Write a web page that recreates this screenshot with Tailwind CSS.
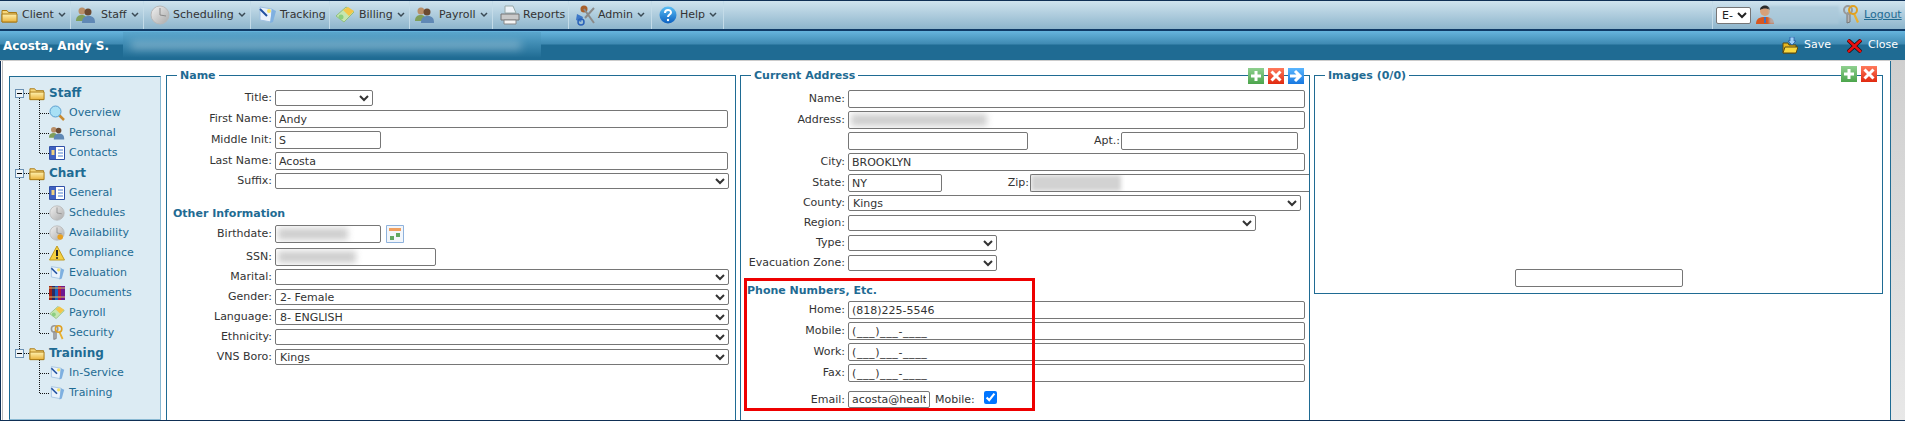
<!DOCTYPE html>
<html><head><meta charset="utf-8"><title>Staff</title>
<script src="https://cdn.jsdelivr.net/npm/@tailwindcss/browser@4"></script>
</head>
<body class="bg-white">
<svg class="absolute w-0 h-0" aria-hidden="true"><defs>
<linearGradient id="gf" x1="0" y1="0" x2="0" y2="1"><stop offset="0" stop-color="#fff2b0"/><stop offset="1" stop-color="#e9b23c"/></linearGradient>
<linearGradient id="gc" x1="0" y1="0" x2="1" y2="1"><stop offset="0" stop-color="#f2f2f2"/><stop offset="1" stop-color="#a9a9a9"/></linearGradient>
<linearGradient id="gh" x1="0" y1="0" x2="0" y2="1"><stop offset="0" stop-color="#5cc0f5"/><stop offset="1" stop-color="#0a5fc0"/></linearGradient>
<linearGradient id="gg" x1="0" y1="0" x2="0" y2="1"><stop offset="0" stop-color="#8fd08f"/><stop offset="1" stop-color="#4ca54c"/></linearGradient>
<linearGradient id="gr" x1="0" y1="0" x2="0" y2="1"><stop offset="0" stop-color="#ff7a5c"/><stop offset="1" stop-color="#e02a10"/></linearGradient>
<linearGradient id="gb" x1="0" y1="0" x2="0" y2="1"><stop offset="0" stop-color="#5ab6ff"/><stop offset="1" stop-color="#1878e0"/></linearGradient>
<symbol id="folder" viewBox="0 0 17 16"><path d="M1 3.500h5l1.500 2h8v9.500h-14.500z" fill="#f6d67a" stroke="#a97a16"/><path d="M1 7h15v8h-15z" fill="url(#gf)" stroke="#a97a16"/></symbol>
<symbol id="people" viewBox="0 0 20 18"><circle cx="6" cy="5" r="3.500" fill="#b98f68"/><path d="M0 15c0-5 3-6 6-6s5 2 5 6z" fill="#7f9f5a"/><circle cx="12" cy="6" r="3.500" fill="#6b4a32"/><path d="M6 17c0-6 3-7 7-7s6 2 6 7z" fill="#5f88b5"/></symbol>
<symbol id="clock" viewBox="0 0 20 20"><circle cx="10" cy="10" r="9" fill="url(#gc)" stroke="#b8b8b8"/><path d="M10 3v7l6 1" fill="none" stroke="#8a8a8a"/></symbol>
<symbol id="clockb" viewBox="0 0 20 20"><circle cx="10" cy="10" r="9" fill="url(#gc)" stroke="#b8b8b8"/><path d="M10 3v7l6 1" fill="none" stroke="#8a8a8a"/><circle cx="14" cy="15" r="3.500" fill="#e8a020"/></symbol>
<symbol id="track" viewBox="0 0 20 18"><path d="M3 1l12 2-1 13-11-2z" fill="#e9f2fb" stroke="#9fc0e0"/><path d="M15 3l4 2-3 11-3 1z" fill="#7fb0e0"/><path d="M3 3l7 7" stroke="#2050a0" stroke-width="2"/><circle cx="12" cy="5" r="2" fill="#f5e26a"/></symbol>
<symbol id="money" viewBox="0 0 20 20"><path d="M1 11l10-9 8 5-10 10z" fill="#c6e6b0" stroke="#8fbf80"/><path d="M8 5l5-3 6 4-5 5z" fill="#f3c64a"/><circle cx="6" cy="12" r="2.500" fill="#8ccf80"/></symbol>
<symbol id="printer" viewBox="0 0 20 20"><path d="M5 1h8l3 7h-11z" fill="#eef3f8" stroke="#9aa"/><path d="M1 9h18v6h-18z" fill="#c9c9c9" stroke="#777"/><path d="M4 15h12v4h-12z" fill="#f5f5f5" stroke="#888"/></symbol>
<symbol id="admin" viewBox="0 0 21 21"><circle cx="9" cy="4" r="3.500" fill="#a8602c"/><path d="M2 9l6 3-2 5-5-2z" fill="#3d78c8"/><path d="M10 13l9-10M9 4l10 14" stroke="#8a8a8a" stroke-width="2"/><circle cx="6" cy="17" r="3" fill="none" stroke="#2a62b8" stroke-width="1.500"/></symbol>
<symbol id="help" viewBox="0 0 18 18"><circle cx="9" cy="9" r="8.500" fill="url(#gh)"/><path d="M6 7c0-4 6-4 6-.500 0 2-3 2-3 4.500" fill="none" stroke="#fff" stroke-width="2"/><circle cx="9" cy="14" r="1.200" fill="#fff"/></symbol>
<symbol id="glass" viewBox="0 0 16 16"><path d="M10 10l5 5" stroke="#c98a30" stroke-width="2.500"/><circle cx="6.500" cy="6.500" r="5.500" fill="#a8e0f5" stroke="#5a9fd0"/></symbol>
<symbol id="card" viewBox="0 0 16 16"><path d="M.5 1.500h15v13h-15z" fill="#fff" stroke="#3050a8"/><path d="M1 2h6v12h-6z" fill="#3f60c0"/><path d="M2.500 5h3v5h-3z" fill="#f0d080"/><path d="M9 5h5M9 8h5M9 11h5" stroke="#4f80d0"/></symbol>
<symbol id="warn" viewBox="0 0 16 16"><path d="M8 1l7.500 14h-15z" fill="#f5d040" stroke="#c09a20"/><path d="M8 5v6" stroke="#222" stroke-width="2"/><circle cx="8" cy="13" r="1" fill="#222"/></symbol>
<symbol id="books" viewBox="0 0 16 16"><path d="M0 1h3v14h-3z" fill="#a02018"/><path d="M3 1h3v14h-3z" fill="#2a2a60"/><path d="M6 1h3v14h-3z" fill="#1860c0"/><path d="M9 1h3v14h-3z" fill="#b01840"/><path d="M12 1h4v14h-4z" fill="#701890"/><path d="M0 3h16M0 12h16" stroke="#e8c060"/></symbol>
<symbol id="keys" viewBox="0 0 20 20"><path d="M6 8v10l3-1v-9z" fill="#b5b5b5" stroke="#777"/><circle cx="7" cy="5" r="4" fill="none" stroke="#999" stroke-width="2"/><path d="M12 9l4 9 2-1-4-9z" fill="#e8b030"/><circle cx="12" cy="5" r="4" fill="none" stroke="#e0a020" stroke-width="2"/></symbol>
<symbol id="user" viewBox="0 0 18 20"><circle cx="9" cy="6" r="5" fill="#d8a078"/><path d="M4 5c0-6 10-6 10 0-3-2-7-2-10 0z" fill="#2a2a2a"/><path d="M0 19c0-6 4-7 9-7s9 1 9 7z" fill="#d85820"/><path d="M8 12h2v6h-2z" fill="#4070c0"/></symbol>
<symbol id="save" viewBox="0 0 16 17"><path d="M1 6h5l1 2h7v8h-13z" fill="#e8b820" stroke="#5a4a10"/><path d="M3 10h13l-2 6h-13z" fill="#f8d840" stroke="#5a4a10"/><path d="M8 0h4v4h2l-4 4-4-4h2z" fill="#9fd0f8" stroke="#2050a0" stroke-width=".7"/></symbol>
<symbol id="bigx" viewBox="0 0 15 14"><path d="M1 1l13 12M14 1l-13 12" stroke="#101010" stroke-width="4"/><path d="M1 1l13 12M14 1l-13 12" stroke="#e81010" stroke-width="2.500"/></symbol>
<symbol id="plus" viewBox="0 0 16 16"><path d="M0 0h16v16h-16z" fill="url(#gg)"/><path d="M8 3v10M3 8h10" stroke="#fff" stroke-width="3"/></symbol>
<symbol id="del" viewBox="0 0 16 16"><path d="M0 0h16v16h-16z" fill="url(#gr)"/><path d="M3.500 3.500l9 9M12.500 3.500l-9 9" stroke="#fff" stroke-width="3"/></symbol>
<symbol id="arrow" viewBox="0 0 16 16"><path d="M0 0h16v16h-16z" fill="url(#gb)"/><path d="M7 3l5 5-5 5M2 8h9" fill="none" stroke="#fff" stroke-width="3"/></symbol>
<symbol id="cal" viewBox="0 0 18 18"><path d="M.5.500h17v17h-17z" fill="#f2f6fb" stroke="#8fb2dc"/><path d="M3 3h12v3h-12z" fill="#f0a060"/><path d="M4 11h4v4h-4z" fill="#60a860"/><path d="M10 8h4v4h-4z" fill="#60a860"/></symbol>
<symbol id="chev" viewBox="0 0 8 6"><path d="M1 1l3 3 3-3" fill="none" stroke="#3a4a55" stroke-width="1.500"/></symbol>
</defs></svg>

<div class="w-[1905px] h-[421px] overflow-hidden flex flex-col font-['DejaVu_Sans',sans-serif] text-[11px] text-[#333] border-t border-b border-[#0f2f55]">

  <!-- toolbar -->
  <div class="h-[30px] shrink-0 flex bg-gradient-to-b from-[#cfe3ee] to-[#8db5cc] border-b-2 border-[#0f3a66]">
    <div class="w-[71px] border-r border-[#c3dbe8] flex items-center overflow-hidden"><svg class="w-[17px] h-[16px] ml-[1px] mr-[4px] shrink-0"><use href="#folder"/></svg>Client<svg class="w-[8px] h-[6px] ml-[4px]"><use href="#chev"/></svg></div>
    <div class="w-[73px] border-r border-[#c3dbe8] flex items-center pl-[5px]"><svg class="w-[20px] h-[18px] mr-[5px]"><use href="#people"/></svg>Staff<svg class="w-[8px] h-[6px] ml-[4px]"><use href="#chev"/></svg></div>
    <div class="w-[107px] border-r border-[#c3dbe8] flex items-center pl-[6px]"><svg class="w-[20px] h-[20px] mr-[3px]"><use href="#clock"/></svg>Scheduling<svg class="w-[8px] h-[6px] ml-[4px]"><use href="#chev"/></svg></div>
    <div class="w-[79px] border-r border-[#c3dbe8] flex items-center pl-[6px]"><svg class="w-[20px] h-[18px] mr-[3px]"><use href="#track"/></svg>Tracking</div>
    <div class="w-[80px] border-r border-[#c3dbe8] flex items-center pl-[5px]"><svg class="w-[20px] h-[20px] mr-[4px]"><use href="#money"/></svg>Billing<svg class="w-[8px] h-[6px] ml-[4px]"><use href="#chev"/></svg></div>
    <div class="w-[83px] border-r border-[#c3dbe8] flex items-center pl-[5px]"><svg class="w-[20px] h-[18px] mr-[4px]"><use href="#people"/></svg>Payroll<svg class="w-[8px] h-[6px] ml-[4px]"><use href="#chev"/></svg></div>
    <div class="w-[76px] border-r border-[#c3dbe8] flex items-center pl-[7px]"><svg class="w-[20px] h-[20px] mr-[3px]"><use href="#printer"/></svg>Reports</div>
    <div class="w-[83px] border-r border-[#c3dbe8] flex items-center pl-[6px]"><svg class="w-[21px] h-[21px] mr-[2px]"><use href="#admin"/></svg>Admin<svg class="w-[8px] h-[6px] ml-[4px]"><use href="#chev"/></svg></div>
    <div class="w-[72px] border-r border-[#c3dbe8] flex items-center pl-[7px]"><svg class="w-[18px] h-[18px] mr-[3px]"><use href="#help"/></svg>Help<svg class="w-[8px] h-[6px] ml-[4px]"><use href="#chev"/></svg></div>
    <div class="w-[989px] border-r border-[#c3dbe8]"></div>
    <div class="flex-1 flex items-center pl-[3px]">
      <select class="w-[35px] h-[17px] bg-white border border-[#767676] rounded-[2px] text-[11px] text-[#222] pl-[1px]"><option>E-</option></select>
      <svg class="w-[18px] h-[20px] ml-[5px] shrink-0"><use href="#user"/></svg>
      <div class="w-[70px] h-[18px] -ml-[5px] bg-[#a9c7d8]/70 blur-[1px]"></div>
      <svg class="w-[20px] h-[20px] ml-[2px] shrink-0"><use href="#keys"/></svg>
      <a class="ml-[3px] underline text-[#1f6b93]">Logout</a>
    </div>
  </div>

  <!-- title bar -->
  <div class="h-[29px] shrink-0 flex items-center text-white bg-[linear-gradient(#66b4dd_0,#3f8ab2_13px,#1f6b93_14px,#1f6b93_100%)]">
    <b class="ml-[3px] w-[120px] text-[12px] font-bold">Acosta, Andy S.</b>
    <div class="w-[418px] h-[26px] -mt-[2px] overflow-hidden bg-[linear-gradient(#5aa6cd,#1f6b93)]">
      <div class="h-[7px] w-[390px] mt-[10px] ml-[8px] bg-white/35 blur-[4px]"></div>
    </div>
    <div class="flex-1 flex justify-end items-center">
      <svg class="w-[16px] h-[17px] mr-[6px]"><use href="#save"/></svg><span class="mr-[16px]">Save</span>
      <svg class="w-[15px] h-[14px] mr-[6px]"><use href="#bigx"/></svg><span class="mr-[7px]">Close</span>
    </div>
  </div>

  <!-- main -->
  <div class="flex-1 min-h-0 flex bg-white border-t border-[#cccccc] overflow-hidden">
    <div class="w-[3px] shrink-0 border-l border-[#0f2f55] relative"><div class="absolute left-[1px] top-0 bottom-0 w-[1px] bg-[#bbb]"></div></div>

    <!-- sidebar -->
    <nav class="relative w-[152px] shrink-0 ml-[6px] mt-[15px] bg-[#dcebf3] border border-[#8ab9d3] border-l-[#1f6b93] border-t-[#1f6b93] pt-[6px] text-[#1f6b93]">
      <svg class="absolute left-0 top-[1px] w-[150px] h-[330px]" fill="none" stroke="#111" stroke-dasharray="1 1" shape-rendering="crispEdges">
        <path d="M9.500 20v251M29.500 20v55M29.500 100v155M29.500 280v35M14 15h5M29.500 35h9M29.500 55h9M29.500 75h9M14 95h5M29.500 115h9M29.500 135h9M29.500 155h9M29.500 175h9M29.500 195h9M29.500 215h9M29.500 235h9M29.500 255h9M14 275h5M29.500 295h9M29.500 315h9"/>
      </svg>
      <div class="relative">
        <div class="h-5 flex items-center pl-[5px] font-bold text-[12px]"><span class="w-[9px] h-[9px] border border-[#6a8fb0] bg-[#eef4f8] flex items-center justify-center mr-[5px]"><span class="w-[5px] h-[1px] bg-black"></span></span><svg class="w-[16px] h-[16px] mr-[4px]"><use href="#folder"/></svg>Staff</div>
        <div class="h-5 flex items-center pl-[39px]"><svg class="w-[16px] h-[16px] mr-[4px]"><use href="#glass"/></svg>Overview</div>
        <div class="h-5 flex items-center pl-[39px]"><svg class="w-[16px] h-[16px] mr-[4px]"><use href="#people"/></svg>Personal</div>
        <div class="h-5 flex items-center pl-[39px]"><svg class="w-[16px] h-[16px] mr-[4px]"><use href="#card"/></svg>Contacts</div>
        <div class="h-5 flex items-center pl-[5px] font-bold text-[12px]"><span class="w-[9px] h-[9px] border border-[#6a8fb0] bg-[#eef4f8] flex items-center justify-center mr-[5px]"><span class="w-[5px] h-[1px] bg-black"></span></span><svg class="w-[16px] h-[16px] mr-[4px]"><use href="#folder"/></svg>Chart</div>
        <div class="h-5 flex items-center pl-[39px]"><svg class="w-[16px] h-[16px] mr-[4px]"><use href="#card"/></svg>General</div>
        <div class="h-5 flex items-center pl-[39px]"><svg class="w-[16px] h-[16px] mr-[4px]"><use href="#clock"/></svg>Schedules</div>
        <div class="h-5 flex items-center pl-[39px]"><svg class="w-[16px] h-[16px] mr-[4px]"><use href="#clockb"/></svg>Availability</div>
        <div class="h-5 flex items-center pl-[39px]"><svg class="w-[16px] h-[16px] mr-[4px]"><use href="#warn"/></svg>Compliance</div>
        <div class="h-5 flex items-center pl-[39px]"><svg class="w-[16px] h-[16px] mr-[4px]"><use href="#track"/></svg>Evaluation</div>
        <div class="h-5 flex items-center pl-[39px]"><svg class="w-[16px] h-[16px] mr-[4px]"><use href="#books"/></svg>Documents</div>
        <div class="h-5 flex items-center pl-[39px]"><svg class="w-[16px] h-[16px] mr-[4px]"><use href="#money"/></svg>Payroll</div>
        <div class="h-5 flex items-center pl-[39px]"><svg class="w-[16px] h-[16px] mr-[4px]"><use href="#keys"/></svg>Security</div>
        <div class="h-5 flex items-center pl-[5px] font-bold text-[12px]"><span class="w-[9px] h-[9px] border border-[#6a8fb0] bg-[#eef4f8] flex items-center justify-center mr-[5px]"><span class="w-[5px] h-[1px] bg-black"></span></span><svg class="w-[16px] h-[16px] mr-[4px]"><use href="#folder"/></svg>Training</div>
        <div class="h-5 flex items-center pl-[39px]"><svg class="w-[16px] h-[16px] mr-[4px]"><use href="#track"/></svg>In-Service</div>
        <div class="h-5 flex items-center pl-[39px]"><svg class="w-[16px] h-[16px] mr-[4px]"><use href="#track"/></svg>Training</div>
      </div>
    </nav>

    <!-- name -->
    <fieldset class="w-[570px] h-[400px] shrink-0 ml-[5px] mt-[7px] border border-[#1f6b93]">
      <legend class="ml-[10px] px-[3px] font-bold text-[#1f6b93] leading-[15px]">Name</legend>
      <div class="flex items-center h-[16px] mt-[7px] mb-[4px]"><label class="w-[105px] mr-[3px] pt-[1px] text-right">Title:</label><select class="w-[98px] h-[16px] border border-[#767676] rounded-[2px] bg-white"><option></option></select></div>
      <div class="flex items-center h-[18px] mb-[3px]"><label class="w-[105px] mr-[3px] pt-[1px] text-right">First Name:</label><input value="Andy" class="w-[453px] h-[18px] border border-[#767676] rounded-[2px] px-[3px]"></div>
      <div class="flex items-center h-[18px] mb-[3px]"><label class="w-[105px] mr-[3px] pt-[1px] text-right">Middle Init:</label><input value="S" class="w-[106px] h-[18px] border border-[#767676] rounded-[2px] px-[3px]"></div>
      <div class="flex items-center h-[18px] mb-[3px]"><label class="w-[105px] mr-[3px] pt-[1px] text-right">Last Name:</label><input value="Acosta" class="w-[453px] h-[18px] border border-[#767676] rounded-[2px] px-[3px]"></div>
      <div class="flex items-center h-[16px]"><label class="w-[105px] mr-[3px] pt-[1px] text-right">Suffix:</label><select class="w-[454px] h-[16px] border border-[#767676] rounded-[2px] bg-white"><option></option></select></div>
      <h3 class="mt-[18px] mb-[4px] ml-[6px] font-bold text-[#1f6b93] leading-[14px]">Other Information</h3>
      <div class="flex items-center h-[18px] mb-[5px]"><label class="w-[105px] mr-[3px] pt-[1px] text-right">Birthdate:</label><div class="w-[106px] h-[18px] border border-[#767676] rounded-[2px] overflow-hidden p-[2px]"><div class="w-[70px] h-[12px] bg-[#cfcfcf] blur-[3px]"></div></div><svg class="w-[18px] h-[18px] ml-[5px]"><use href="#cal"/></svg></div>
      <div class="flex items-center h-[18px] mb-[3px]"><label class="w-[105px] mr-[3px] pt-[1px] text-right">SSN:</label><div class="w-[161px] h-[18px] border border-[#767676] rounded-[2px] overflow-hidden p-[2px]"><div class="w-[78px] h-[12px] bg-[#cfcfcf] blur-[3px]"></div></div></div>
      <div class="flex items-center h-[16px] mb-[4px]"><label class="w-[105px] mr-[3px] pt-[1px] text-right">Marital:</label><select class="w-[454px] h-[16px] border border-[#767676] rounded-[2px] bg-white"><option></option></select></div>
      <div class="flex items-center h-[16px] mb-[4px]"><label class="w-[105px] mr-[3px] pt-[1px] text-right">Gender:</label><select class="w-[454px] h-[16px] border border-[#767676] rounded-[2px] bg-white"><option>2- Female</option></select></div>
      <div class="flex items-center h-[16px] mb-[4px]"><label class="w-[105px] mr-[3px] pt-[1px] text-right">Language:</label><select class="w-[454px] h-[16px] border border-[#767676] rounded-[2px] bg-white"><option>8- ENGLISH</option></select></div>
      <div class="flex items-center h-[16px] mb-[4px]"><label class="w-[105px] mr-[3px] pt-[1px] text-right">Ethnicity:</label><select class="w-[454px] h-[16px] border border-[#767676] rounded-[2px] bg-white"><option></option></select></div>
      <div class="flex items-center h-[16px]"><label class="w-[105px] mr-[3px] pt-[1px] text-right">VNS Boro:</label><select class="w-[454px] h-[16px] border border-[#767676] rounded-[2px] bg-white"><option>Kings</option></select></div>
    </fieldset>

    <!-- address -->
    <fieldset class="relative w-[569px] h-[400px] shrink-0 ml-[4px] mt-[7px] border border-[#1f6b93]">
      <legend class="ml-[10px] px-[3px] font-bold text-[#1f6b93] leading-[15px]">Current Address</legend>
      <div class="absolute right-[5px] -top-[15px] flex gap-[4px]"><svg class="w-[16px] h-[16px]"><use href="#plus"/></svg><svg class="w-[16px] h-[16px]"><use href="#del"/></svg><svg class="w-[16px] h-[16px]"><use href="#arrow"/></svg></div>
      <div class="flex items-center h-[18px] mt-[7px] mb-[3px]"><label class="w-[104px] mr-[3px] pt-[1px] text-right">Name:</label><input class="w-[457px] h-[18px] border border-[#767676] rounded-[2px] px-[3px]"></div>
      <div class="flex items-center h-[18px] mb-[3px]"><label class="w-[104px] mr-[3px] pt-[1px] text-right">Address:</label><div class="w-[457px] h-[18px] border border-[#767676] rounded-[2px] overflow-hidden p-[2px]"><div class="w-[136px] h-[12px] bg-[#cfcfcf] blur-[3px]"></div></div></div>
      <div class="flex items-center h-[18px] mb-[3px]"><label class="w-[104px] mr-[3px]"></label><input class="w-[180px] h-[18px] border border-[#767676] rounded-[2px] px-[3px]"><label class="w-[92px] pt-[1px] text-right mr-[1px]">Apt.:</label><input class="w-[177px] h-[18px] border border-[#767676] rounded-[2px] px-[3px]"></div>
      <div class="flex items-center h-[18px] mb-[3px]"><label class="w-[104px] mr-[3px] pt-[1px] text-right">City:</label><input value="BROOKLYN" class="w-[457px] h-[18px] border border-[#767676] rounded-[2px] px-[3px]"></div>
      <div class="flex items-center h-[18px] mb-[3px]"><label class="w-[104px] mr-[3px] pt-[1px] text-right">State:</label><input value="NY" class="w-[94px] h-[18px] border border-[#767676] rounded-[2px] px-[3px]"><label class="w-[87px] pt-[1px] text-right mr-[1px]">Zip:</label><div class="w-[279px] h-[18px] shrink-0 border-y border-l border-[#767676] rounded-l-[2px] overflow-hidden"><div class="w-[90px] h-[16px] bg-[#d2d2d2] blur-[2px]"></div></div></div>
      <div class="flex items-center h-[16px] mb-[4px]"><label class="w-[104px] mr-[3px] pt-[1px] text-right">County:</label><select class="w-[453px] h-[16px] border border-[#767676] rounded-[2px] bg-white"><option>Kings</option></select></div>
      <div class="flex items-center h-[16px] mb-[4px]"><label class="w-[104px] mr-[3px] pt-[1px] text-right">Region:</label><select class="w-[408px] h-[16px] border border-[#767676] rounded-[2px] bg-white"><option></option></select></div>
      <div class="flex items-center h-[16px] mb-[4px]"><label class="w-[104px] mr-[3px] pt-[1px] text-right">Type:</label><select class="w-[149px] h-[16px] border border-[#767676] rounded-[2px] bg-white"><option></option></select></div>
      <div class="flex items-center h-[16px]"><label class="w-[104px] mr-[3px] pt-[1px] text-right">Evacuation Zone:</label><select class="w-[149px] h-[16px] border border-[#767676] rounded-[2px] bg-white"><option></option></select></div>
      <h3 class="mt-[13px] mb-[3px] ml-[6px] font-bold text-[#1f6b93] leading-[14px]">Phone Numbers, Etc.</h3>
      <div class="flex items-center h-[18px] mb-[3px]"><label class="w-[104px] mr-[3px] pt-[1px] text-right">Home:</label><input value="(818)225-5546" class="w-[457px] h-[18px] border border-[#767676] rounded-[2px] px-[3px]"></div>
      <div class="flex items-center h-[18px] mb-[3px]"><label class="w-[104px] mr-[3px] pt-[1px] text-right">Mobile:</label><input value="(___)___-____" class="w-[457px] h-[18px] border border-[#767676] rounded-[2px] px-[3px] tracking-[0.6px]"></div>
      <div class="flex items-center h-[18px] mb-[3px]"><label class="w-[104px] mr-[3px] pt-[1px] text-right">Work:</label><input value="(___)___-____" class="w-[457px] h-[18px] border border-[#767676] rounded-[2px] px-[3px] tracking-[0.6px]"></div>
      <div class="flex items-center h-[18px] mb-[9px]"><label class="w-[104px] mr-[3px] pt-[1px] text-right">Fax:</label><input value="(___)___-____" class="w-[457px] h-[18px] border border-[#767676] rounded-[2px] px-[3px] tracking-[0.6px]"></div>
      <div class="flex items-center h-[17px]"><label class="w-[104px] mr-[3px] pt-[1px] text-right">Email:</label><input value="acosta@healthcare.com" class="w-[82px] h-[17px] border border-[#767676] rounded-[2px] px-[3px]"><label class="ml-[5px] w-[49px] pt-[1px]">Mobile:</label><input type="checkbox" checked class="w-[13px] h-[13px] -mt-[5px] accent-[#0075ff]"></div>
      <div class="absolute left-[3px] top-[195px] w-[291px] h-[133px] border-[3px] border-[#ee0000] pointer-events-none"></div>
    </fieldset>

    <!-- images -->
    <fieldset class="relative w-[569px] h-[226px] shrink-0 ml-[4px] mt-[7px] border border-[#1f6b93]">
      <legend class="ml-[10px] px-[3px] font-bold text-[#1f6b93] leading-[15px]">Images (0/0)</legend>
      <div class="absolute right-[5px] -top-[17px] flex gap-[4px]"><svg class="w-[16px] h-[16px]"><use href="#plus"/></svg><svg class="w-[16px] h-[16px]"><use href="#del"/></svg></div>
      <div class="h-[210px] flex items-end justify-center pb-[6px]"><input class="w-[168px] h-[18px] border border-[#767676] rounded-[2px]"></div>
    </fieldset>

    <div class="flex-1"></div>
    <div class="w-[15px] shrink-0 border-l border-[#1f6b93] bg-gradient-to-b from-[#cfcfcf] to-[#e8e8e8]"></div>
  </div>
</div>
</body></html>
